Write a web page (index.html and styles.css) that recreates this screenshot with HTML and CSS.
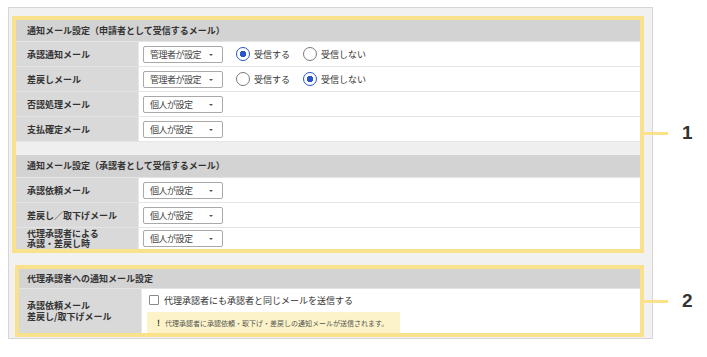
FILE: index.html
```html
<!DOCTYPE html>
<html lang="ja">
<head>
  <meta charset="UTF-8">
  <title>通知メール設定</title>
  <link rel="stylesheet" href="styles.css">
</head>
<body>
  <div class="page">
    <div class="panel">
      <!-- 1: 通知メール設定 -->
      <div class="box">
        <div class="head">通知メール設定（申請者として受信するメール）</div>
        <div class="row">
          <div class="label">承認通知メール</div>
          <div class="value">
            <span class="select">管理者が設定<i class="caret"></i></span>
            <span class="radio on">受信する</span>
            <span class="radio">受信しない</span>
          </div>
        </div>
        <div class="row">
          <div class="label">差戻しメール</div>
          <div class="value">
            <span class="select">管理者が設定<i class="caret"></i></span>
            <span class="radio">受信する</span>
            <span class="radio on">受信しない</span>
          </div>
        </div>
        <div class="row">
          <div class="label">否認処理メール</div>
          <div class="value"><span class="select">個人が設定<i class="caret"></i></span></div>
        </div>
        <div class="row">
          <div class="label">支払確定メール</div>
          <div class="value"><span class="select">個人が設定<i class="caret"></i></span></div>
        </div>
        <div class="spacer"></div>
        <div class="head head-2">通知メール設定（承認者として受信するメール）</div>
        <div class="row">
          <div class="label">承認依頼メール</div>
          <div class="value"><span class="select">個人が設定<i class="caret"></i></span></div>
        </div>
        <div class="row">
          <div class="label">差戻し／取下げメール</div>
          <div class="value"><span class="select">個人が設定<i class="caret"></i></span></div>
        </div>
        <div class="row row-last">
          <div class="label two-line tight">代理承認者による<br>承認・差戻し時</div>
          <div class="value"><span class="select">個人が設定<i class="caret"></i></span></div>
        </div>
      </div>

      <!-- 2: 代理承認者への通知 -->
      <div class="box box-2">
        <div class="head head-small">代理承認者への通知メール設定</div>
        <div class="row row-tall">
          <div class="label two-line">承認依頼メール<br>差戻し/取下げメール</div>
          <div class="value value-stack">
            <label class="check"><span class="checkbox"></span>代理承認者にも承認者と同じメールを送信する</label>
            <div class="note"><b>!</b>代理承認者に承認依頼・取下げ・差戻しの通知メールが送信されます。</div>
          </div>
        </div>
      </div>
    </div>

    <div class="callout callout-1"><span class="line"></span><span class="num">1</span></div>
    <div class="callout callout-2"><span class="line"></span><span class="num">2</span></div>
  </div>
</body>
</html>
```

FILE: styles.css
```css
* { box-sizing: border-box; margin: 0; padding: 0; }
body {
  background: #ffffff;
  font-family: "Noto Sans CJK JP", "Noto Sans", sans-serif;
  font-size: 9px;
  color: #333;
}
.page {
  position: relative;
  width: 707px;
  height: 357px;
  padding: 7px 0 0 8px;
}
/* 外枠 */
.panel {
  width: 645px;
  background: #f1f1f1;
  border: 1px solid #d6d6d6;
  padding: 8px 8px 1px 3px;
}
/* 黄色の枠 */
.box {
  border: 4px solid #fae28c;
  background: #ffffff;
}
.box-2 {
  margin: 12px 0 0 3px;
}
.head {
  height: 21px;
  line-height: 21px;
  background: #d3d3d3;
  font-weight: bold;
  padding-left: 11px;
}
.head-2 { height: 22px; line-height: 22px; }
.head-small { height: 19px; line-height: 19px; padding-left: 8px; }
.spacer {
  height: 14px;
  background: #efefef;
  border-top: 1px solid #e6e6e6;
}
.row {
  display: flex;
  height: 25px;
  border-top: 1px solid #e4e4e4;
}
.row-last { height: 22px; }
.row-tall { height: 45px; }
.label {
  width: 123px;
  background: #d9d9d9;
  font-weight: bold;
  padding-left: 11px;
  display: flex;
  align-items: center;
  border-right: 1px solid #e8e8e8;
  flex-shrink: 0;
}
.box-2 .label { padding-left: 8px; }
.two-line { line-height: 11px; }
.two-line.tight { line-height: 10px; padding-top: 1px; }
.value {
  flex: 1;
  display: flex;
  align-items: center;
  padding-left: 4px;
  gap: 13px;
}
/* セレクト */
.select {
  position: relative;
  width: 80px;
  height: 17px;
  line-height: 15px;
  border: 1px solid #a9a9a9;
  border-radius: 2px;
  background: #fff;
  padding-left: 6px;
  letter-spacing: -0.5px;
  color: #444;
}
.caret {
  position: absolute;
  right: 9px;
  top: 7px;
  border-left: 2px solid transparent;
  border-right: 2px solid transparent;
  border-top: 2px solid #555;
}
/* ラジオ */
.radio {
  display: flex;
  align-items: center;
  gap: 4px;
}
.radio::before {
  content: "";
  width: 12px;
  height: 12px;
  border-radius: 50%;
  border: 1px solid #7a7a7a;
  background: #fff;
}
.radio.on::before {
  border: 1.5px solid #2a55c8;
  background: radial-gradient(circle, #2a55c8 0 3px, #fff 3.5px);
}
/* 代理承認者 */
.value-stack {
  flex-direction: column;
  align-items: flex-start;
  justify-content: flex-end;
  gap: 6px;
  padding-left: 5px;
}
.check {
  display: flex;
  align-items: center;
  gap: 5px;
  margin-left: 2px;
  height: 12px;
}
.checkbox {
  width: 10px;
  height: 10px;
  border: 1px solid #8a8a8a;
  border-radius: 1px;
  background: #fff;
}
.note {
  width: 253px;
  height: 21px;
  line-height: 21px;
  background: #fcf3c8;
  font-size: 7px;
  color: #555;
  padding-left: 10px;
}
.note b {
  font-size: 8px;
  color: #333;
  margin-right: 5px;
}
/* 番号の吹き出し */
.callout {
  position: absolute;
  left: 644px;
  display: flex;
  align-items: center;
}
.callout-1 { top: 122px; }
.callout-2 { top: 290px; }
.line {
  width: 24px;
  height: 3px;
  background: #fae28c;
}
.num {
  margin-left: 14px;
  font-family: "Liberation Sans", Arial, sans-serif;
  font-weight: bold;
  font-size: 19px;
  line-height: 22px;
  color: #333;
}
```
